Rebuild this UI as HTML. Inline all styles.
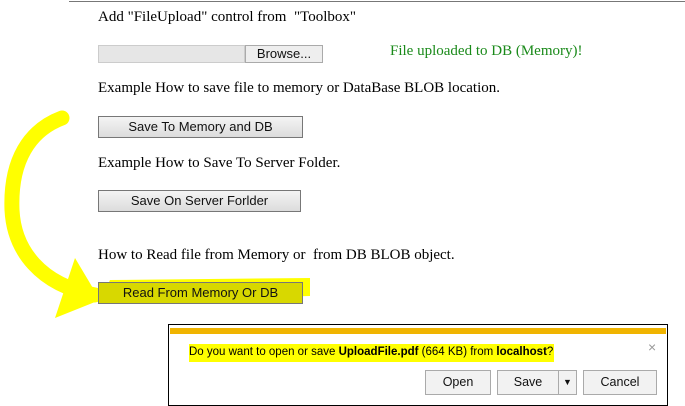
<!DOCTYPE html>
<html><head><style>
body{margin:0;width:685px;height:404px;background:#fff;position:relative;overflow:hidden;font-family:"Liberation Serif",serif;font-size:15px;color:#000}
.a{position:absolute;white-space:nowrap}
.btn{position:absolute;box-sizing:border-box;border:1px solid #777;background:linear-gradient(#f4f4f4,#dcdcdc);font-family:"Liberation Sans",sans-serif;font-size:13px;text-align:center;color:#111}
.db{position:absolute;box-sizing:border-box;border:1px solid #aaa;background:#f2f2f2;font-family:"Liberation Sans",sans-serif;font-size:12.5px;text-align:center;line-height:22px;color:#111}
</style></head><body>
<div class="a" style="left:69px;top:1px;width:616px;height:1px;background:#777"></div>
<svg class="a" style="left:0;top:0" width="685" height="404">
<path d="M62 118 C30 130 10 160 12 210 C14 250 40 285 95 295" fill="none" stroke="#ffff00" stroke-width="15" stroke-linecap="round"/>
<path d="M75 258 L100 300 L55 318 Z" fill="#ffff00"/>
<path d="M110 280 L310 278 L310 296 L100 302 Z" fill="#ffff00"/>
</svg>
<div class="a" style="left:98px;top:9px">Add "FileUpload" control from &nbsp;"Toolbox"</div>
<div class="a" style="left:98px;top:45px;width:147px;height:18px;background:#e6e6e6;border:1px solid #ccc;box-sizing:border-box"></div>
<div class="btn" style="left:245px;top:45px;width:78px;height:18px;line-height:16px;border-color:#aaa;background:#eee">Browse...</div>
<div class="a" style="left:390px;top:43px;color:#1a8a1a">File uploaded to DB (Memory)!</div>
<div class="a" style="left:98px;top:80px">Example How to save file to memory or DataBase BLOB location.</div>
<div class="btn" style="left:98px;top:116px;width:205px;height:22px;line-height:20px">Save To Memory and DB</div>
<div class="a" style="left:98px;top:155px">Example How to Save To Server Folder.</div>
<div class="btn" style="left:98px;top:190px;width:203px;height:22px;line-height:20px">Save On Server Forlder</div>
<div class="a" style="left:98px;top:247px">How to Read file from Memory or &nbsp;from DB BLOB object.</div>
<div class="btn" style="left:98px;top:282px;width:205px;height:22px;line-height:20px;background:#d8d800">Read From Memory Or DB</div>
<div class="a" style="left:168px;top:324px;width:500px;height:82px;border:1px solid #000;box-sizing:border-box;background:#fff">
<div class="a" style="left:1px;top:3px;width:496px;height:6px;background:#f0b400"></div>
<div class="a" style="left:20px;top:19px;height:18px;width:365px;background:#ffff00"></div>
<div class="a" style="left:20px;top:21px;font-family:'Liberation Sans',sans-serif;font-size:11.5px">Do you want to open or save <b>UploadFile.pdf</b> (664 KB) from <b>localhost</b>?</div>
<div class="a" style="left:479px;top:14px;color:#999;font-family:'Liberation Sans',sans-serif;font-size:14px">×</div>
<div class="db" style="left:256px;top:45px;width:66px;height:25px">Open</div>
<div class="db" style="left:328px;top:45px;width:62px;height:25px">Save</div>
<div class="db" style="left:389px;top:45px;width:19px;height:25px;font-size:9px">▼</div>
<div class="db" style="left:414px;top:45px;width:74px;height:25px">Cancel</div>
</div>
</body></html>
